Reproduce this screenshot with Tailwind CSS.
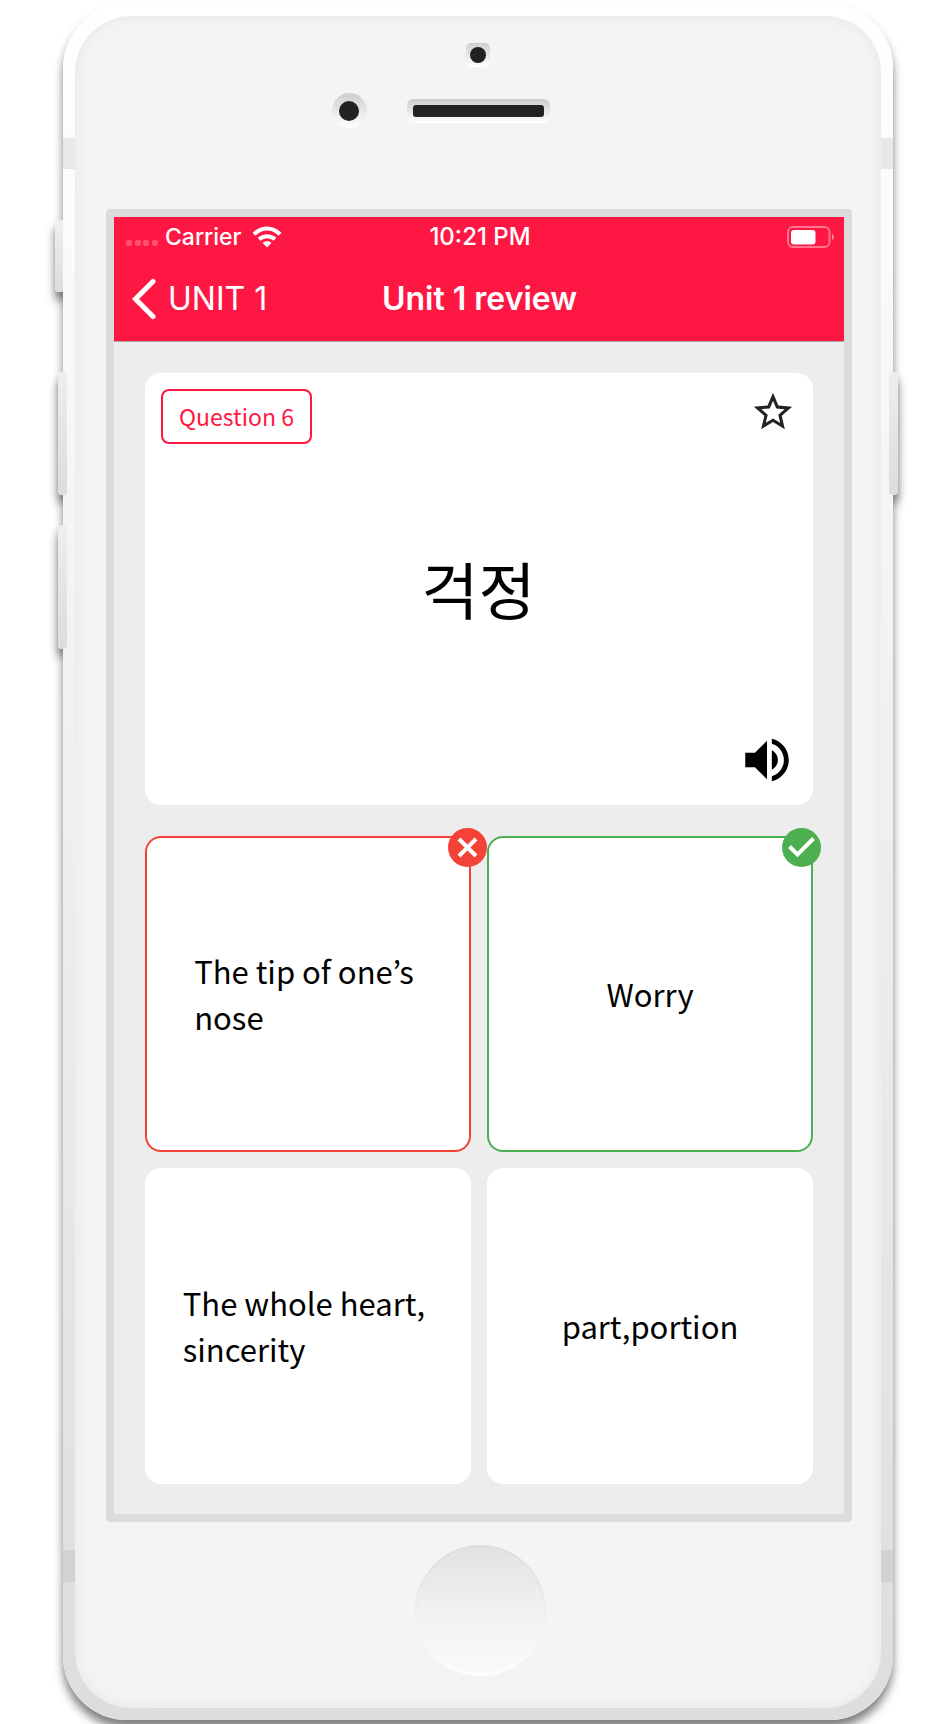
<!DOCTYPE html>
<html lang="en">
<head>
<meta charset="utf-8">
<meta name="viewport" content="width=device-width, initial-scale=1">
<title>Unit 1 review</title>
<script src="https://cdn.jsdelivr.net/npm/@tailwindcss/browser@4"></script>
</head>
<body class="bg-white overflow-x-hidden font-['Noto_Sans_CJK_KR',sans-serif] text-black">
<div class="pt-1 pb-1 pl-[63px] pr-[59px] overflow-hidden">
  <!-- Phone body -->
  <div class="relative rounded-[64px] shadow-[0_8px_10px_rgba(0,0,0,0.5)]">
    <!-- Side buttons -->
    <div class="absolute -left-2 top-[216px] h-[72px] w-3 rounded-l-sm bg-linear-to-b from-[#f0f0f0] to-[#dcdcdc] shadow-[0_8px_10px_rgba(0,0,0,0.5)]"></div>
    <div class="absolute -left-[5px] top-[368px] h-[123px] w-[9px] rounded-sm bg-linear-to-b from-[#eeeeee] to-[#dcdcdc] shadow-[0_8px_10px_rgba(0,0,0,0.5)]"></div>
    <div class="absolute -left-[5px] top-[521px] h-[124px] w-[9px] rounded-sm bg-linear-to-b from-[#eeeeee] to-[#dcdcdc] shadow-[0_8px_10px_rgba(0,0,0,0.5)]"></div>
    <div class="absolute -right-[5px] top-[368px] h-[123px] w-[9px] rounded-sm bg-linear-to-b from-[#eeeeee] to-[#dcdcdc] shadow-[0_8px_10px_rgba(0,0,0,0.5)]"></div>

    <div class="relative rounded-[64px] bg-linear-to-b from-white to-[#dddddd] p-3">
      <!-- Antenna bands and the inner faces of the volume keys -->
      <div class="absolute inset-x-0 top-[134px] h-[31px] bg-[#e8e8e8]"></div>
      <div class="absolute inset-x-0 bottom-[138px] h-8 bg-[#d2d2d2]"></div>
      <div class="absolute left-0 top-[368px] h-[123px] w-1 rounded-r-sm bg-linear-to-b from-[#eeeeee] to-[#dcdcdc]"></div>
      <div class="absolute left-0 top-[521px] h-[124px] w-1 rounded-r-sm bg-linear-to-b from-[#eeeeee] to-[#dcdcdc]"></div>
      <div class="absolute right-0 top-[368px] h-[123px] w-1 rounded-l-sm bg-linear-to-b from-[#eeeeee] to-[#dcdcdc]"></div>

      <div class="relative flex flex-col rounded-[56px] bg-[#f4f4f4] pb-8 pl-[31px] pr-[29px] pt-[27px] shadow-[inset_0_0_16px_rgba(0,0,0,0.06)]">
        <!-- Sensors and ear speaker -->
        <div class="flex flex-col items-center gap-[26px] pb-[81px] pr-[2px]">
          <div class="flex size-6 items-center justify-center rounded-[5px] bg-linear-to-b from-[#cfcfcf] to-white">
            <div class="size-4 rounded-full bg-[#222222]"></div>
          </div>
          <div class="grid w-full grid-cols-[1fr_auto_1fr] items-center">
            <div class="mr-10 flex size-[35px] items-center justify-center justify-self-end rounded-full bg-linear-to-b from-[#cfcfcf] to-white">
              <div class="size-5 rounded-full bg-[#222222]"></div>
            </div>
            <div class="rounded-[6px] bg-linear-to-b from-[#cccccc] to-white px-[6px] py-[6px]">
              <div class="h-3 w-[131px] rounded-[3px] bg-[#222222]"></div>
            </div>
          </div>
        </div>

        <!-- Screen -->
        <div class="rounded-[4px] bg-[#dcdcdc] p-2">
          <div class="bg-[#ededed]">
            <header class="border-b border-[#b3a3a7] bg-[#ff1744] pb-3 font-['Inter',sans-serif] text-white">
              <div class="grid grid-cols-[1fr_auto_1fr] items-center pl-[11px] pr-[9px] pt-1 text-[24px] font-medium leading-8">
                <div class="flex items-center">
                  <svg class="mt-3 h-[7px] w-[34px]" viewBox="0 0 34 7" fill="#ff5074" aria-hidden="true">
                    <rect x="1" y="0" width="6" height="6" rx="2"/><rect x="10" y="0" width="6" height="6" rx="2"/><rect x="18" y="0" width="6" height="6" rx="2"/><rect x="27" y="0" width="6" height="6" rx="2"/>
                  </svg>
                  <span class="ml-[6px] text-[23px]">Carrier</span>
                  <svg class="ml-[10px] h-[22px] w-[30px]" viewBox="0 0 30 22" aria-hidden="true">
                    <g fill="none" stroke="#fff" stroke-width="4"><path d="M2 8.2Q8 2.4 15 2.4T28 8.2"/><path d="M7 13.3Q10.500 10.200 15 10.200T23 13.3"/></g>
                    <path fill="#fff" d="M10.500 16.800Q15 13.200 19.500 16.800L15 21.500Z"/>
                  </svg>
                </div>
                <span class="text-[24px]">10:21 PM</span>
                <svg class="h-[22px] w-12 justify-self-end" viewBox="0 0 48 22" aria-label="Battery" role="img">
                  <rect x="1" y="1" width="41.500" height="20" rx="5" fill="none" stroke="#ff748f" stroke-width="2"/>
                  <rect x="4" y="4" width="24.500" height="14.500" rx="3" fill="#fff"/>
                  <path d="M45 8q2 .8 2 3t-2 3z" fill="#ff8ba2"/>
                </svg>
              </div>
              <div class="grid grid-cols-[1fr_auto_1fr] items-center pl-[17px] pr-4 pt-4 text-[32px] leading-[60px]">
                <a href="#" class="flex items-center gap-3">
                  <svg class="h-[42px] w-[25px]" viewBox="0 0 25 42" fill="none" stroke="#fff" stroke-width="5" stroke-linecap="round" stroke-linejoin="miter" aria-hidden="true"><path d="M22 3.500L4.500 21 22 38.500"/></svg>
                  <span>UNIT 1</span>
                </a>
                <h1 class="font-semibold">Unit 1 review</h1>
              </div>
            </header>

            <main class="flex flex-col gap-[31px] px-[31px] pb-[30px] pt-[31px]">
              <!-- Question card -->
              <section class="flex h-[432px] flex-col justify-between rounded-2xl bg-white p-4 pr-[17px]">
                <div class="flex items-start justify-between">
                  <div class="rounded-lg border-2 border-[#ff1744] px-4 text-[23px] leading-[51px] text-[#ff1744]">Question 6</div>
                  <button type="button" aria-label="Favourite"><svg class="size-[46px]" viewBox="0 0 24 24" fill="#222"><path d="M22 9.240l-7.190-.62L12 2 9.190 8.630 2 9.240l5.460 4.730L5.820 21 12 17.270 18.180 21l-1.630-7.030L22 9.240zM12 15.400l-3.760 2.270 1-4.280-3.320-2.880 4.380-.38L12 6.100l1.710 4.040 4.380.38-3.320 2.880 1 4.280L12 15.400z"/></svg></button>
                </div>
                <p lang="ko" class="text-center text-[62px] leading-[92px]">걱정</p>
                <button type="button" aria-label="Play audio" class="self-end"><svg class="size-[58px]" viewBox="0 0 24 24"><path d="M3 9v6h4l5 5V4L7 9H3zm13.500 3c0-1.770-1.020-3.290-2.500-4.030v8.050c1.480-.73 2.500-2.250 2.500-4.020zM14 3.230v2.060c2.890.86 5 3.540 5 6.710s-2.110 5.850-5 6.710v2.060c4.010-.91 7-4.490 7-8.770s-2.990-7.860-7-8.770z"/></svg></button>
              </section>

              <!-- Answers -->
              <section class="grid grid-cols-2 gap-4 text-[31px] leading-[46px]">
                <button type="button" class="relative flex h-[316px] items-center justify-center rounded-2xl border-2 border-[#f44336] bg-white text-left">
                  <span class="pr-2">The tip of one’s<br>nose</span>
                  <svg class="absolute -right-[18px] -top-[10px] z-10 size-[39px]" viewBox="0 0 39 39" fill="none" stroke="#fff" stroke-width="4" aria-label="Wrong" role="img"><circle cx="19.500" cy="19.500" r="19.500" fill="#f44336" stroke="none"/><path d="M11 11l17 17M28 11L11 28"/></svg>
                </button>
                <button type="button" class="relative flex h-[316px] items-center justify-center rounded-2xl border-2 border-[#4caf50] bg-white">
                  <span>Worry</span>
                  <svg class="absolute -right-[10px] -top-[10px] size-[39px]" viewBox="0 0 39 39" fill="none" stroke="#fff" stroke-width="4" aria-label="Correct" role="img"><circle cx="19.500" cy="19.500" r="19.500" fill="#4caf50" stroke="none"/><path d="M7.500 18.500l8 8L31.500 10.500"/></svg>
                </button>
                <button type="button" class="flex h-[316px] items-center justify-center rounded-2xl bg-white text-left">
                  <span class="pr-2">The whole heart,<br>sincerity</span>
                </button>
                <button type="button" class="flex h-[316px] items-center justify-center rounded-2xl bg-white">
                  <span>part,portion</span>
                </button>
              </section>
            </main>
          </div>
        </div>

        <!-- Home button -->
        <button type="button" aria-label="Home" class="ml-[3px] mt-[23px] size-[131px] self-center rounded-full bg-linear-to-b from-[#dcdcdc] to-white p-[2px]">
          <span class="block size-full rounded-full bg-linear-to-b from-[#e2e2e2] via-[#f1f1f1] to-[#fafafa]"></span>
        </button>
      </div>
    </div>
  </div>
</div>
</body>
</html>
